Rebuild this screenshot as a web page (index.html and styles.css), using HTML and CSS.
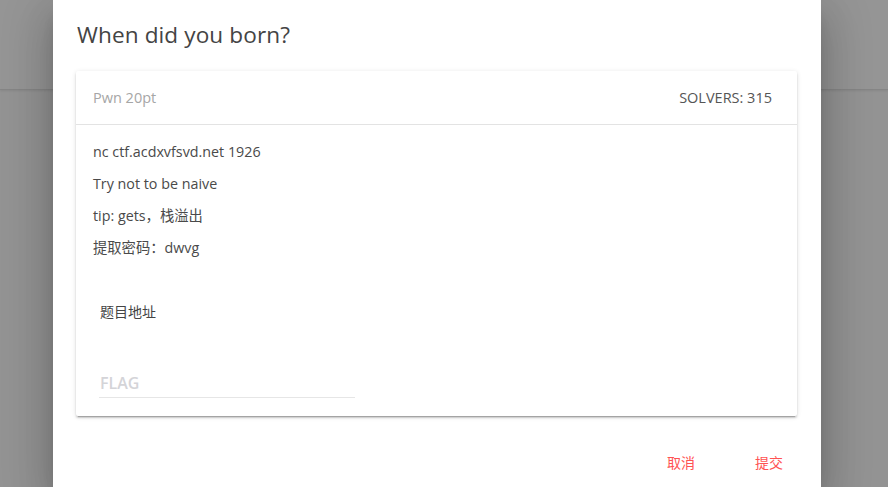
FILE: index.html
```html
<!DOCTYPE html>
<html lang="zh">
<head>
<meta charset="utf-8">
<title>When did you born?</title>
<link rel="stylesheet" href="styles.css">
</head>
<body>
<div class="appbar"></div>
<div class="dialog">
  <h2 class="dialog-title">When did you born?</h2>
  <div class="card">
    <div class="card-head">
      <span class="cat">Pwn 20pt</span>
      <span class="solvers">SOLVERS: 315</span>
    </div>
    <div class="card-body">
      <p class="line">nc ctf.acdxvfsvd.net 1926</p>
      <p class="line">Try not to be naive</p>
      <p class="line">tip: gets，栈溢出</p>
      <p class="line">提取密码：dwvg</p>
      <button class="flat-btn link-btn">题目地址</button>
      <div class="field">
        <input class="flag-input" type="text" placeholder="FLAG">
      </div>
    </div>
  </div>
  <div class="actions">
    <button class="flat-btn action">取消</button>
    <button class="flat-btn action">提交</button>
  </div>
</div>
</body>
</html>
```
FILE: styles.css
```css
html, body {
  margin: 0;
  height: 100%;
}
body {
  background: #939393;
  overflow: hidden;
  font-family: "Open Sans", "Noto Sans CJK SC", sans-serif;
}
.appbar {
  height: 89px;
  background: #959595;
  border-bottom: 1px solid #858585;
  box-shadow: 0 1px 2px rgba(0,0,0,0.08);
}
.dialog {
  position: absolute;
  left: 53px;
  top: 0;
  bottom: 0;
  width: 768px;
  background: #fff;
  box-shadow: 0 11px 15px -7px rgba(0,0,0,.2), 0 24px 38px 3px rgba(0,0,0,.14), 0 9px 46px 8px rgba(0,0,0,.12);
  display: flex;
  flex-direction: column;
  overflow: hidden;
}
.dialog-title {
  margin: 0;
  padding: 19px 24px 0 24px;
  height: 52px;
  box-sizing: border-box;
  font-size: 22.6px;
  line-height: 32px;
  font-weight: 400;
  color: #444;
  letter-spacing: 0.1px;
}
.card {
  flex: none;
  margin: 19px 24px 0 23px;
  background: #fff;
  border-radius: 2px;
  box-shadow: 0 3px 1px -2px rgba(0,0,0,.2), 0 2px 2px 0 rgba(0,0,0,.14), 0 1px 5px 0 rgba(0,0,0,.12);
  height: 345px;
}
.card-head {
  height: 53px;
  display: flex;
  align-items: center;
  justify-content: space-between;
  padding: 0 25px 0 17px;
  border-bottom: 1px solid #e3e3e3;
  font-size: 14.5px;
}
.cat { color: #a6a6a6; }
.solvers { color: #555; }
.card-body {
  padding: 11px 16px 0 17px;
  display: flex;
  flex-direction: column;
  align-items: flex-start;
}
.line {
  margin: 0;
  height: 32px;
  line-height: 32px;
  font-size: 14.3px;
  color: #4a4a4a;
}
.flat-btn {
  border: 0;
  background: transparent;
  font-family: "Open Sans", "Noto Sans CJK SC", sans-serif;
  font-size: 14px;
  cursor: pointer;
  height: 36px;
  padding: 0 8px;
}
.link-btn {
  margin: 29px 0 0 -1px;
  color: #444;
}
.field {
  margin: 40px 0 0 6px;
  width: 256px;
  border-bottom: 1px solid #e6e6e6;
}
.flag-input {
  border: 0;
  outline: none;
  padding: 0 0 0 1px;
  width: 100%;
  height: 28px;
  font-family: "Open Sans", sans-serif;
  font-size: 16px;
  background: transparent;
}
.flag-input::placeholder {
  color: #d4d4d8;
  font-weight: 600;
}
.actions {
  display: flex;
  justify-content: flex-end;
  padding: 28px 8px 0 0;
}
.action {
  width: 88px;
  padding: 0 16px;
  color: #ff5252;
}
```
